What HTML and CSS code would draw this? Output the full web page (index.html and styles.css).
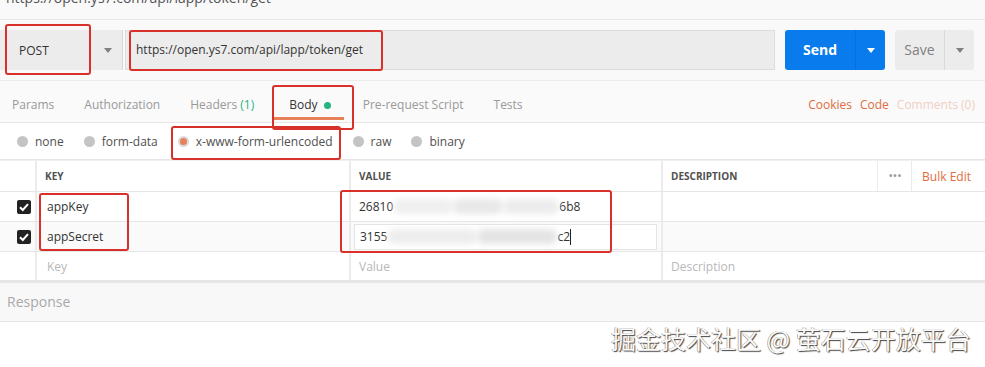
FILE: index.html
```html
<!DOCTYPE html>
<html lang="zh-CN">
<head>
    <meta charset="UTF-8">
    <title>Postman - token/get</title>
    <link rel="stylesheet" href="styles.css">
</head>
<body>
    <div class="top-url"><span>https://open.ys7.com/api/lapp/token/get</span></div>

    <div class="req-bar">
        <div class="method">
            <span>POST</span>
            <span class="caret"></span>
        </div>
        <div class="url-input">https://open.ys7.com/api/lapp/token/get</div>
        <div class="send-btn">
            <span class="send-label">Send</span>
            <span class="send-drop"><span class="caret white"></span></span>
        </div>
        <div class="save-btn">
            <span class="save-label">Save</span>
            <span class="save-drop"><span class="caret"></span></span>
        </div>
    </div>

    <div class="tabs">
        <span class="tab">Params</span>
        <span class="tab">Authorization</span>
        <span class="tab">Headers <em class="count">(1)</em></span>
        <span class="tab active">Body <i class="dot"></i></span>
        <span class="tab">Pre-request Script</span>
        <span class="tab">Tests</span>
        <span class="tab-links">
            <span class="link">Cookies</span>
            <span class="link">Code</span>
            <span class="link faded">Comments (0)</span>
        </span>
    </div>

    <div class="body-types">
        <label class="radio"><i></i>none</label>
        <label class="radio"><i></i>form-data</label>
        <label class="radio checked"><i></i>x-www-form-urlencoded</label>
        <label class="radio"><i></i>raw</label>
        <label class="radio"><i></i>binary</label>
    </div>

    <div class="kv-table">
        <div class="kv-row head">
            <div class="cell chk"></div>
            <div class="cell key">KEY</div>
            <div class="cell val">VALUE</div>
            <div class="cell desc">DESCRIPTION
                <span class="desc-tools"><span class="more">&bull;&bull;&bull;</span><span class="bulk">Bulk Edit</span></span>
            </div>
        </div>
        <div class="kv-row">
            <div class="cell chk"><span class="checkbox"><svg viewBox="0 0 14 14" width="14" height="14"><path d="M3 7.2 L5.8 10 L11 4.2" fill="none" stroke="#fff" stroke-width="2"/></svg></span></div>
            <div class="cell key">appKey</div>
            <div class="cell val">26810<span class="blur w1"></span><span class="blur w2"></span><span class="blur w3"></span>6b8</div>
            <div class="cell desc"></div>
        </div>
        <div class="kv-row editing">
            <div class="cell chk"><span class="checkbox"><svg viewBox="0 0 14 14" width="14" height="14"><path d="M3 7.2 L5.8 10 L11 4.2" fill="none" stroke="#fff" stroke-width="2"/></svg></span></div>
            <div class="cell key">appSecret</div>
            <div class="cell val"><div class="val-input">3155<span class="blur w4"></span><span class="blur w5"></span>c2<span class="cursor"></span></div></div>
            <div class="cell desc"></div>
        </div>
        <div class="kv-row last">
            <div class="cell chk"></div>
            <div class="cell key ph">Key</div>
            <div class="cell val ph">Value</div>
            <div class="cell desc ph">Description</div>
        </div>
    </div>

    <div class="response">Response</div>

    <div class="mark mark-method"></div>
    <div class="mark mark-url"></div>
    <div class="mark mark-body"></div>
    <div class="mark mark-type"></div>
    <div class="mark mark-keys"></div>
    <div class="mark mark-vals"></div>

    <div class="watermark">掘金技术社区 @ 萤石云开放平台</div>
</body>
</html>
```

FILE: styles.css
```css
body {
    margin: 0;
    width: 985px;
    height: 367px;
    overflow: hidden;
    position: relative;
    background: #fff;
    font-family: "Open Sans", "Noto Sans", sans-serif;
    font-size: 12px;
    color: #333;
}
.top-url {
    height: 19px;
    overflow: hidden;
    background: #f9f9f9;
    border-bottom: 1px solid #e8e8e8;
    color: #555;
    font-size: 14px;
}
.top-url span {
    display: block;
    margin-top: -12px;
    padding-left: 6px;
    line-height: 20px;
}
.req-bar {
    display: flex;
    height: 40px;
    padding: 10px 0 10px 0;
    background: #f9f9f9;
    border-bottom: 1px solid #ececec;
}
.method {
    width: 123px;
    display: flex;
    align-items: center;
    justify-content: space-between;
    padding: 1px 10px 0 19px;
    box-sizing: border-box;
    background: #ececec;
    border-right: 1px solid #d8d8d8;
    color: #333;
}
.caret {
    display: inline-block;
    width: 0;
    height: 0;
    border-left: 4px solid transparent;
    border-right: 4px solid transparent;
    border-top: 5px solid #808080;
}
.caret.white {
    border-top-color: #fff;
}
.url-input {
    width: 650px;
    margin-left: 2px;
    box-sizing: border-box;
    padding-left: 10px;
    line-height: 38px;
    background: #ececec;
    border: 1px solid #dcdcdc;
    color: #333;
}
.send-btn {
    display: flex;
    width: 100px;
    margin-left: 10px;
    background: #097bed;
    border-radius: 3px;
    color: #fff;
    font-weight: bold;
    font-size: 14px;
}
.send-label {
    width: 70px;
    text-align: center;
    line-height: 40px;
    border-right: 1px solid #0a6fd6;
}
.send-drop, .save-drop {
    flex: 1;
    display: flex;
    align-items: center;
    justify-content: center;
}
.save-btn {
    display: flex;
    width: 79px;
    margin-left: 10px;
    background: #ececec;
    border-radius: 3px;
    color: #808080;
    font-size: 14px;
}
.save-label {
    width: 49px;
    text-align: center;
    line-height: 40px;
    border-right: 1px solid #dadada;
}
.tabs {
    display: flex;
    height: 41px;
    padding-left: 12px;
    padding-right: 10px;
    background: #fafafa;
    border-bottom: 1px solid #e6e6e6;
    color: #999;
}
.tab {
    position: relative;
    margin-right: 30px;
    height: 41px;
    line-height: 47px;
}
.tab .count {
    font-style: normal;
    color: #26b47f;
}
.tab.active {
    color: #333;
    padding: 0 15px;
    margin-left: -10px;
    margin-right: 17px;
}
.tab.active::after {
    content: "";
    position: absolute;
    left: 0;
    right: 2px;
    bottom: 2px;
    height: 3px;
    background: #e8805a;
}
.dot {
    display: inline-block;
    width: 7px;
    height: 7px;
    border-radius: 50%;
    background: #26b47f;
    margin-left: 3px;
    vertical-align: 0;
}
.tab-links {
    margin-left: auto;
    display: flex;
    gap: 8px;
    line-height: 47px;
}
.link {
    color: #e06c40;
}
.link.faded {
    color: #efcfc2;
}
.body-types {
    display: flex;
    align-items: center;
    height: 36px;
    padding-left: 17px;
    border-bottom: 1px solid #e6e6e6;
    color: #505050;
}
.radio {
    display: flex;
    align-items: center;
    margin-right: 20px;
}
.radio i {
    width: 11px;
    height: 11px;
    border-radius: 50%;
    background: #c4c4c4;
    margin-right: 7px;
    box-sizing: border-box;
}
.radio.checked i {
    background: #e8805a;
    border: 2px solid #d9d9d9;
}
.radio.checked {
    margin-left: 0;
    margin-right: 20px;
}
.kv-table {
    border-top: 1px solid #f0f0f0;
}
.kv-row {
    display: flex;
    height: 29px;
    border-bottom: 1px solid #e6e6e6;
}
.kv-row.head {
    height: 30px;
}
.kv-row.last {
    height: 28px;
    border-bottom: 3px solid #e6e6e6;
}
.kv-row.editing {
    background: #fafafa;
}
.cell {
    display: flex;
    align-items: center;
    box-sizing: border-box;
    border-right: 2px solid #ebebeb;
}
.cell.chk {
    width: 37px;
    justify-content: flex-end;
    padding-right: 4px;
}
.cell.key {
    width: 314px;
    padding-left: 10px;
}
.cell.val {
    width: 312px;
    padding-left: 8px;
}
.cell.desc {
    flex: 1;
    padding-left: 8px;
    border-right: none;
}
.head .cell {
    font-size: 10px;
    font-weight: bold;
    color: #505050;
}
.head .cell.key {
    padding-left: 8px;
}
.desc-tools {
    margin-left: auto;
    display: flex;
    align-items: center;
    height: 30px;
}
.more {
    color: #999;
    font-size: 9px;
    letter-spacing: 1px;
    padding: 0 9px 0 11px;
    border-left: 1px solid #ebebeb;
    border-right: 1px solid #ebebeb;
    line-height: 30px;
}
.bulk {
    font-weight: normal;
    font-size: 12px;
    color: #e06c40;
    padding: 0 14px 0 10px;
}
.checkbox {
    display: inline-block;
    width: 14px;
    height: 14px;
    background: #222;
    border-radius: 2px;
}
.checkbox svg {
    display: block;
}
.ph {
    color: #b8b8b8;
}
.val-input {
    display: flex;
    align-items: center;
    width: 303px;
    height: 26px;
    margin-left: -5px;
    padding-left: 5px;
    box-sizing: border-box;
    background: #fff;
    border: 1px solid #e4e4e4;
}
.blur {
    display: inline-block;
    height: 15px;
    background: #e6e6e6;
    filter: blur(3px);
    border-radius: 7px;
}
.w1 { width: 60px; background: #efefef; }
.w2 { width: 50px; background: #e8e8e8; }
.w3 { width: 56px; background: #ececec; }
.w4 { width: 90px; background: #ededed; }
.w5 { width: 80px; background: #e4e4e4; }
.cursor {
    display: inline-block;
    width: 1px;
    height: 16px;
    background: #222;
}
.response {
    height: 38px;
    line-height: 38px;
    padding-left: 7px;
    background: #f8f8f8;
    border-bottom: 1px solid #e3e3e3;
    color: #a8a8a8;
    font-size: 14px;
}
.mark {
    position: absolute;
    border: 2px solid #d9302a;
    border-radius: 3px;
    box-sizing: border-box;
}
.mark-method { left: 5px; top: 24px; width: 86px; height: 51px; }
.mark-url { left: 129px; top: 30px; width: 254px; height: 41px; }
.mark-body { left: 272px; top: 85px; width: 82px; height: 45px; }
.mark-type { left: 171px; top: 126px; width: 170px; height: 34px; }
.mark-keys { left: 39px; top: 193px; width: 90px; height: 58px; }
.mark-vals { left: 340px; top: 190px; width: 272px; height: 63px; }
.watermark {
    position: absolute;
    left: 611px;
    top: 320px;
    white-space: nowrap;
    line-height: 36px;
    font-family: "Noto Sans CJK SC", sans-serif;
    font-size: 25px;
    color: #fafafa;
    text-shadow: 1px 1px 1px #444, -0.5px -0.5px 0 #888;
}
```
